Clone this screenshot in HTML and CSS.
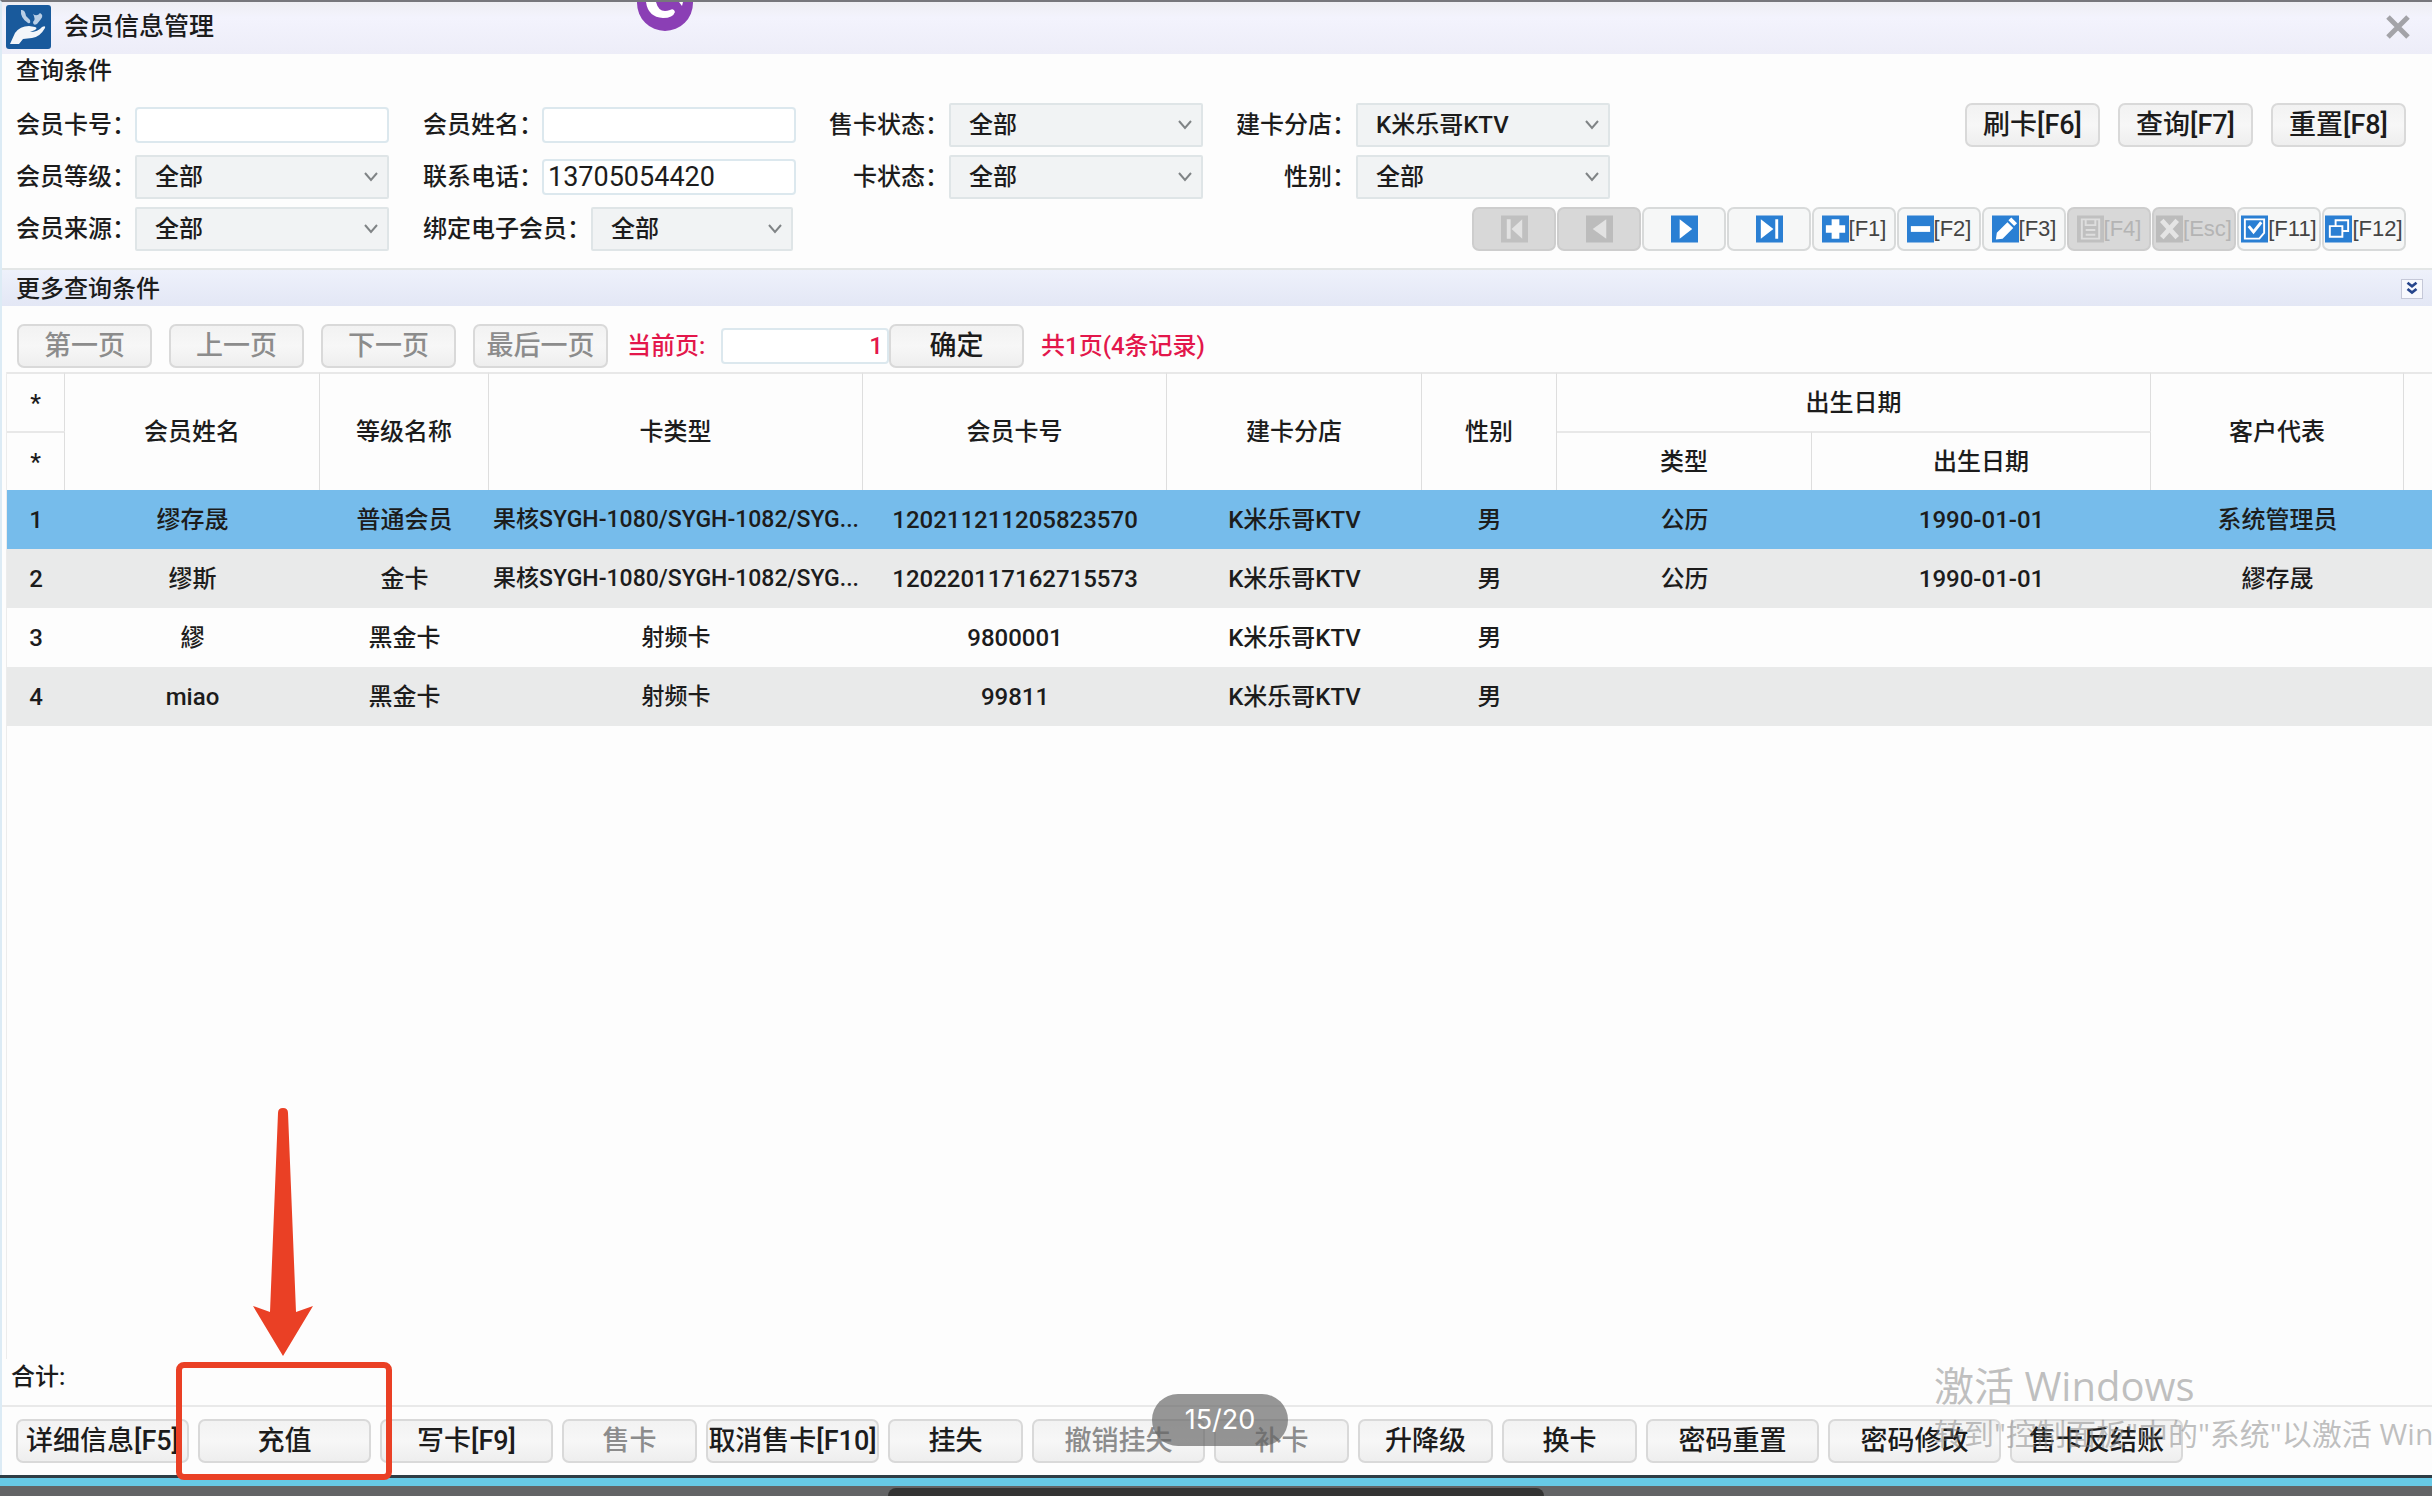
FILE: index.html
```html
<!DOCTYPE html>
<html lang="zh-CN">
<head>
<meta charset="utf-8">
<title>会员信息管理</title>
<link rel="stylesheet" href="styles.css">
</head>
<body>
<main class="window">
  <header class="titlebar">
    <svg class="app-icon" viewBox="0 0 45 44" aria-hidden="true">
      <rect width="45" height="44" rx="3" fill="#195a9c"/>
      <path d="M4 39l5-11q5-7 14-7l6 1q3 1 0 3l-5 2q8 0 12-5q4-2 3 1q-5 9-13 10l-9 1-4 5z" fill="#f2f6fa"/>
      <path d="M15 5q-1 8 7 13q3 1 2-3l-4-4q-1-7-5-6zM27 9q4 3 7-1q4 2 1 6l-4 5q-4 2-4-2q3-3 0-8z" fill="#b9cfe6"/>
    </svg>
    <h1 class="title">会员信息管理</h1>
    <button class="close" aria-label="关闭"><svg viewBox="0 0 24 24"><path d="M2 2l20 20M22 2L2 22" stroke="#a3a3a8" stroke-width="5"/></svg></button>
    <svg class="recorder" viewBox="0 0 58 34" aria-hidden="true">
      <circle cx="29" cy="1" r="28" fill="#8b3fb5"/>
      <path d="M10 0q2 15 17 16q10 0 12-6q-1-4-5-2q-11 4-14-8z" fill="#fff"/>
      <path d="M43 0h4l-1 4z" fill="#fff"/>
    </svg>
  </header>

  <form class="query">
    <h2 class="query-title">查询条件</h2>
    <div class="query-row">
      <div class="fields">
        <label for="card">会员卡号：</label><input id="card" type="text">
        <label for="name">会员姓名：</label><input id="name" type="text">
        <label class="end" for="sale">售卡状态：</label><select id="sale"><option>全部</option></select>
        <label class="end" for="shop">建卡分店：</label><select id="shop"><option>K米乐哥KTV</option></select>
        <label for="level">会员等级：</label><select id="level"><option>全部</option></select>
        <label for="phone">联系电话：</label><input id="phone" type="text" value="13705054420">
        <label class="end" for="state">卡状态：</label><select id="state"><option>全部</option></select>
        <label class="end" for="sex">性别：</label><select id="sex"><option>全部</option></select>
      </div>
      <div class="actions">
        <button class="btn" type="button">刷卡[F6]</button>
        <button class="btn" type="button">查询[F7]</button>
        <button class="btn" type="button">重置[F8]</button>
      </div>
    </div>
    <div class="query-row">
      <div class="fields">
        <label for="source">会员来源：</label><select id="source"><option>全部</option></select>
        <div class="bind"><label for="bind">绑定电子会员：</label><select id="bind"><option>全部</option></select></div>
      </div>
      <div class="toolbar">
        <button class="tool" type="button" disabled aria-label="首条"><svg viewBox="0 0 28 28"><rect width="28" height="28" fill="#c0c0c0"/><path d="M6 4h4v20H6zM22 4v20L11 14z" fill="#e2e2e2"/></svg></button>
        <button class="tool" type="button" disabled aria-label="上一条"><svg viewBox="0 0 28 28"><rect width="28" height="28" fill="#bcbcbc"/><path d="M21 4v20L7 14z" fill="#e2e2e2"/></svg></button>
        <button class="tool" type="button" aria-label="下一条"><svg viewBox="0 0 28 28"><rect width="28" height="28" fill="#2a7fd3"/><path d="M9 4v20l13-10z" fill="#fff"/></svg></button>
        <button class="tool" type="button" aria-label="末条"><svg viewBox="0 0 28 28"><rect width="28" height="28" fill="#2a7fd3"/><path d="M5 4v20l13-10zM20 4h3v20h-3z" fill="#fff"/></svg></button>
        <button class="tool" type="button"><svg viewBox="0 0 28 28"><rect width="28" height="28" fill="#2a7fd3"/><path d="M10 4h8v6h6v8h-6v6h-8v-6H4v-8h6z" fill="#fff"/></svg>[F1]</button>
        <button class="tool" type="button"><svg viewBox="0 0 28 28"><rect width="28" height="28" fill="#2a7fd3"/><path d="M4 11h20v6H4z" fill="#fff"/></svg>[F2]</button>
        <button class="tool" type="button"><svg viewBox="0 0 28 28"><rect width="28" height="28" fill="#2a7fd3"/><path d="M4 25l1-7L16 7l6 6-11 11zM17 5l3-3 6 6-3 3z" fill="#fff"/></svg>[F3]</button>
        <button class="tool" type="button" disabled><svg viewBox="0 0 28 28"><rect width="28" height="28" fill="#c0c0c0"/><path d="M5 4h18v20H5zM9 4v6h10V4M9 15h10M9 20h10" fill="none" stroke="#dedede" stroke-width="2"/></svg>[F4]</button>
        <button class="tool" type="button" disabled><svg viewBox="0 0 28 28"><rect width="28" height="28" fill="#bcbcbc"/><path d="M6 5l16 18M22 5L6 23" stroke="#e4e4e4" stroke-width="5"/></svg>[Esc]</button>
        <button class="tool" type="button"><svg viewBox="0 0 28 28"><rect width="28" height="28" fill="#2a7fd3"/><path d="M4 4h20v14l-5 6H4z" fill="none" stroke="#fff" stroke-width="2"/><path d="M8 11l5 6 8-10" fill="none" stroke="#fff" stroke-width="3"/></svg>[F11]</button>
        <button class="tool" type="button"><svg viewBox="0 0 28 28"><rect width="28" height="28" fill="#2a7fd3"/><path d="M11 11V5h13v11h-6M5 11h13v11H5z" fill="none" stroke="#fff" stroke-width="2"/></svg>[F12]</button>
      </div>
    </div>
  </form>

  <section class="more">
    <h2 class="more-title">更多查询条件</h2>
    <button class="expand" aria-label="展开"><svg viewBox="0 0 22 20"><path d="M6 3l5 4 5-4M6 10l5 4 5-4" fill="none" stroke="#27468c" stroke-width="3"/></svg></button>
  </section>

  <nav class="pager">
    <button class="btn" disabled>第一页</button>
    <button class="btn" disabled>上一页</button>
    <button class="btn" disabled>下一页</button>
    <button class="btn" disabled>最后一页</button>
    <div class="goto"><label for="page">当前页:</label><input id="page" type="text" value="1"><button class="btn">确定</button></div>
    <span class="count">共1页(4条记录)</span>
  </nav>

  <div class="grid">
    <table>
      <colgroup><col class="c-no"><col class="c-name"><col class="c-level"><col class="c-type"><col class="c-card"><col class="c-shop"><col class="c-sex"><col class="c-cal"><col class="c-birth"><col class="c-rep"><col></colgroup>
      <thead>
        <tr><th>*</th><th rowspan="2">会员姓名</th><th rowspan="2">等级名称</th><th rowspan="2">卡类型</th><th rowspan="2">会员卡号</th><th rowspan="2">建卡分店</th><th rowspan="2">性别</th><th colspan="2">出生日期</th><th rowspan="2">客户代表</th><th rowspan="2"></th></tr>
        <tr><th>*</th><th>类型</th><th>出生日期</th></tr>
      </thead>
      <tbody>
        <tr class="selected"><td>1</td><td>缪存晟</td><td>普通会员</td><td>果核SYGH-1080/SYGH-1082/SYG...</td><td>120211211205823570</td><td>K米乐哥KTV</td><td>男</td><td>公历</td><td>1990-01-01</td><td>系统管理员</td><td></td></tr>
        <tr><td>2</td><td>缪斯</td><td>金卡</td><td>果核SYGH-1080/SYGH-1082/SYG...</td><td>120220117162715573</td><td>K米乐哥KTV</td><td>男</td><td>公历</td><td>1990-01-01</td><td>繆存晟</td><td></td></tr>
        <tr><td>3</td><td>繆</td><td>黑金卡</td><td>射频卡</td><td>9800001</td><td>K米乐哥KTV</td><td>男</td><td></td><td></td><td></td><td></td></tr>
        <tr><td>4</td><td>miao</td><td>黑金卡</td><td>射频卡</td><td>99811</td><td>K米乐哥KTV</td><td>男</td><td></td><td></td><td></td><td></td></tr>
      </tbody>
    </table>
  </div>

  <div class="total">合计:</div>
  <footer class="commands">
    <button class="btn wide">详细信息[F5]</button>
    <div class="callout">
      <button class="btn wide">充值</button>
      <svg class="arrow" viewBox="0 0 62 250" aria-hidden="true"><path d="M26 6q0-5 5-5t5 5l8 199 17-6-30 50L1 199l17 6z" fill="#ea4025"/></svg>
      <span class="frame"></span>
    </div>
    <button class="btn wide">写卡[F9]</button>
    <button class="btn" disabled>售卡</button>
    <button class="btn wide">取消售卡[F10]</button>
    <button class="btn">挂失</button>
    <button class="btn wide" disabled>撤销挂失</button>
    <button class="btn" disabled>补卡</button>
    <button class="btn">升降级</button>
    <button class="btn">换卡</button>
    <button class="btn wide">密码重置</button>
    <button class="btn wide">密码修改</button>
    <button class="btn wide">售卡反结账</button>
  </footer>
  <div class="watermark"><p class="wm-title">激活 Windows</p><p class="wm-text">转到"控制面板"中的"系统"以激活 Windows。</p></div>
  <div class="page-pill">15/20</div>
</main>
<div class="taskbar"><div class="dock"></div></div>
</body>
</html>
```

FILE: styles.css
```css
* { box-sizing: border-box; }

body {
  margin: 0;
  min-height: 100vh;
  display: flex;
  flex-direction: column;
  overflow: hidden;
  background: #fdfdfd;
  color: #1c1c1c;
  font: 500 24px/36px Roboto, "Noto Sans CJK SC", sans-serif;
}

h1, h2, p { margin: 0; font: inherit; }
button, input, select { font: inherit; color: inherit; margin: 0; }

.window {
  position: relative;
  flex: 1;
  display: flex;
  flex-direction: column;
  border-top: 2px solid #77777c;
  border-left: 2px solid #dcebf5;
}

/* title bar */
.titlebar {
  position: relative;
  display: flex;
  align-items: center;
  height: 52px;
  padding: 0 20px 2px 4px;
  background: linear-gradient(#eeeef3, #f3f3fd 30%, #ededf8);
}
.app-icon { width: 45px; height: 44px; }
.title { margin-left: 13px; font-size: 25px; }
.close { width: 28px; height: 28px; margin-left: auto; padding: 2px; border: 0; background: none; }
.close svg { display: block; width: 24px; height: 24px; }
.recorder { position: absolute; left: 634px; top: 0; width: 58px; height: 34px; }

/* query form */
.query { display: flex; flex-direction: column; gap: 8px; padding: 0 26px 17px 14px; }
.query-title { line-height: 34px; margin-bottom: 7px; }
.query-row { display: flex; justify-content: space-between; align-items: flex-start; }
.fields {
  display: grid;
  grid-template-columns: 119px 288px 119px 254px 153px 254px 153px 254px;
  grid-auto-rows: 44px;
  row-gap: 8px;
  align-items: center;
}
.query-row:last-child .fields { grid-template-columns: 119px 288px 119px 254px; }
.fields label { white-space: nowrap; }
.fields .end { text-align: right; }
.fields input, .fields select { width: 254px; }
.bind { grid-column: 3 / 5; display: flex; align-items: center; justify-content: space-between; padding-right: 3px; }
.fields .bind select { width: 204px; }

input {
  height: 36px;
  padding: 0 4px;
  border: 2px solid #dce8ee;
  border-radius: 4px;
  background: #fff;
  outline: 0;
}
#phone { font-size: 27px; font-weight: 400; }
select {
  height: 44px;
  padding: 0 18px;
  border: 2px solid #dfe5e7;
  border-radius: 2px;
  appearance: none;
  background: #f1f3f4 url("data:image/svg+xml,%3Csvg xmlns='http://www.w3.org/2000/svg' viewBox='0 0 14 10'%3E%3Cpath d='M1 1l6 7 6-7' fill='none' stroke='%23808486' stroke-width='2'/%3E%3C/svg%3E") right 9px center / 14px 10px no-repeat;
}

.btn {
  flex: none;
  width: 135px;
  height: 44px;
  padding: 0;
  border: 2px solid #d9d9d9;
  border-radius: 7px;
  background: linear-gradient(#f2f2f2, #f7f7f7 50%, #eee);
  font-size: 27px;
  line-height: 36px;
  white-space: nowrap;
}
.btn.wide { width: 173px; }
.btn:disabled { color: #8c8c8c; }

.actions { display: flex; gap: 18px; }
.toolbar { display: flex; gap: 1px; }
.tool {
  display: flex;
  align-items: center;
  justify-content: center;
  width: 84px;
  height: 44px;
  padding: 0;
  border: 2px solid #d8dada;
  border-radius: 7px;
  background: #f6f7f7;
  color: #444;
  font: 22px/36px "Liberation Sans", Arial, sans-serif;
}
.tool svg { width: 27px; height: 36px; padding: 4px 0; flex: none; }
.tool:disabled { background: #d8d8d8; border-color: #cdcdcd; color: #b4b4b4; }

/* collapsed section */
.more {
  display: flex;
  align-items: center;
  justify-content: space-between;
  height: 38px;
  padding: 2px 9px 0 14px;
  border-top: 2px solid #e3e6e6;
  background: linear-gradient(#eef1fb, #e3e7f5);
}
.expand { width: 22px; height: 20px; padding: 0; border: 1px solid #c5c8d8; background: #f8f9fd; }
.expand svg { display: block; width: 20px; height: 18px; }

/* pager */
.pager { display: flex; align-items: center; gap: 17px; padding: 18px 15px 4px; }
.goto { display: flex; align-items: center; padding-left: 2px; color: #e3174b; }
.goto label { width: 94px; }
.goto input { width: 168px; text-align: right; }
.goto .btn { color: #1c1c1c; }
.count { color: #e3174b; }

/* member table */
.grid { flex: 1; margin-left: 4px; border-left: 1px solid #ececec; }
table { width: 100%; border-collapse: separate; border-spacing: 0; table-layout: fixed; }
th, td { height: 59px; padding: 0; text-align: center; font-weight: 500; white-space: nowrap; }
th { border-right: 1px solid #dedede; border-top: 2px solid #e8e8e8; }
th:last-child { border-right: 0; }
thead tr:last-child th:last-child { border-right: 1px solid #dedede; }
td:nth-child(4) { font-size: 23px; }
tbody tr:nth-child(even) { background: #e9eaea; }
tbody .selected { background: #76bceb; }
.c-no { width: 58px; }
.c-name, .c-shop, .c-cal { width: 255px; }
.c-level { width: 169px; }
.c-type { width: 374px; }
.c-card { width: 304px; }
.c-sex { width: 135px; }
.c-birth { width: 339px; }
.c-rep { width: 253px; }

/* footer */
.total { padding: 0 9px 10px; border-bottom: 2px solid #e9e9e9; }
.commands { display: flex; gap: 9px; padding: 12px 14px; }
.callout { position: relative; }
.frame {
  position: absolute;
  left: -22px;
  top: -57px;
  width: 216px;
  height: 118px;
  border: 6px solid #ea4025;
  border-radius: 8px;
  pointer-events: none;
}
.arrow { position: absolute; left: 54px; top: -312px; width: 62px; height: 250px; }

.watermark {
  position: absolute;
  left: 1932px;
  bottom: 20px;
  color: rgba(130, 130, 130, .5);
  font-family: "Open Sans", "Noto Sans CJK SC", sans-serif;
  font-weight: 400;
  white-space: nowrap;
  pointer-events: none;
}
.wm-title { font-size: 40px; line-height: 54px; }
.wm-text { font-size: 30px; line-height: 42px; }
.page-pill {
  position: absolute;
  left: 1150px;
  bottom: 29px;
  width: 136px;
  height: 52px;
  border-radius: 26px;
  background: rgba(100, 100, 100, .68);
  color: #fff;
  font: 400 27px/52px Inter, sans-serif;
  text-align: center;
}

.taskbar { height: 21px; border-top: 3px solid #2e3c44; background: linear-gradient(#67c9e6 8px, #636466 8px); }
.dock { width: 27%; height: 8px; margin: 10px auto 0; border-radius: 12px 12px 0 0; background: #333; }
```
